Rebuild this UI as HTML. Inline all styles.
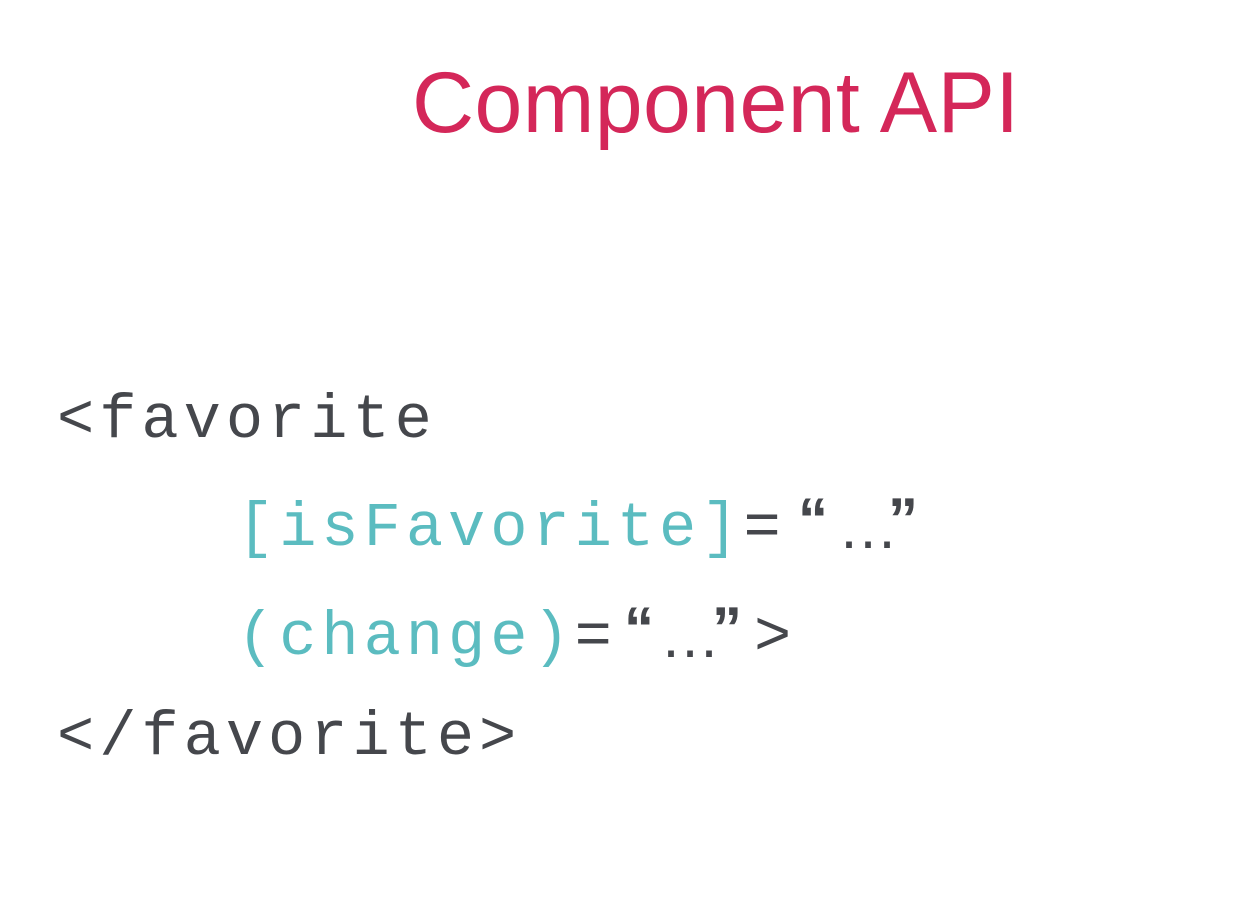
<!DOCTYPE html>
<html><head><style>
body{margin:0;width:1242px;height:902px;background:#fff;overflow:hidden;position:relative}
.t{position:absolute;left:412px;top:54px;font:300 86px "Liberation Sans",sans-serif;color:#d42759;letter-spacing:0.4px;white-space:nowrap}
.c{position:absolute;font:62px "Liberation Mono",monospace;letter-spacing:5px;white-space:nowrap;line-height:1}
.d{color:#45474c}.k{color:#5bbcc0}
.q{position:absolute;font:bold 60px "Liberation Sans",sans-serif;color:#45474c;line-height:1}
.e{font-weight:normal}
</style></head><body>
<div class="t">Component API</div>
<div class="c d" style="left:57px;top:390px">&lt;favorite</div>
<div class="c k" style="left:237px;top:498px">[isFavorite]<span class="d">=</span></div>
<div class="q" style="left:798px;top:490px">“</div>
<div class="q e" style="left:838px;top:498px">…</div>
<div class="q" style="left:888px;top:490px">”</div>
<div class="c k" style="left:237px;top:607px">(change)<span class="d">=</span></div>
<div class="q" style="left:624px;top:599px">“</div>
<div class="q e" style="left:660px;top:607px">…</div>
<div class="q" style="left:712px;top:599px">”</div>
<div class="c d" style="left:754px;top:607px">&gt;</div>
<div class="c d" style="left:57px;top:707px">&lt;/favorite&gt;</div>
</body></html>
